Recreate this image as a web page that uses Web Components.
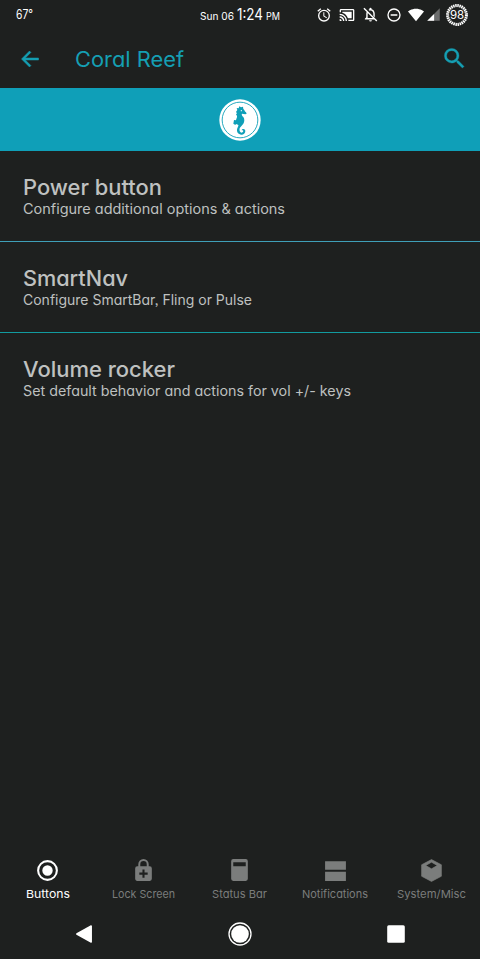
<!DOCTYPE html>
<html lang="en">
<head>
<meta charset="utf-8">
<title>Coral Reef</title>
<style>
html,body{margin:0;background:#1e201f}
body{font-family:Inter,"Noto Sans",sans-serif;font-feature-settings:"cv11","ss03"}
</style>
</head>
<body>
<coral-app></coral-app>
<script>
// Text stretched horizontally to a given width.
class FitText extends HTMLElement {
  connectedCallback() {
    const root = this.attachShadow({mode: 'open'});
    root.innerHTML = '<style>:host{display:block;white-space:nowrap}span{display:inline-block;transform-origin:0 50%}</style><span></span>';
    const s = root.querySelector('span');
    s.textContent = this.getAttribute('text');
    const want = +this.getAttribute('w');
    this.style.width = want + 'px';
    const have = s.getBoundingClientRect().width;
    s.style.transform = `scaleX(${want / have})`;
  }
}
const icons = {
  back: '<path stroke="currentColor" stroke-width=".5" d="M20.500 11H7.330l5.590-5.590L11.500 4l-8 8 8 8 1.410-1.410L7.330 13H20.500z"/>',
  search: '<path stroke="currentColor" stroke-width=".3" d="M15.5 14h-.79l-.28-.27A6.47 6.47 0 0 0 16 9.5 6.5 6.5 0 1 0 9.5 16c1.61 0 3.09-.59 4.23-1.57l.27.28v.79l5 4.99L20.49 19zm-6 0a4.5 4.5 0 1 1 0-9 4.5 4.5 0 0 1 0 9z"/>',
  alarm: '<path d="M22 5.72l-4.6-3.86-1.29 1.53 4.6 3.86zM7.88 3.39L6.6 1.86 2 5.71l1.29 1.53zM12.5 8H11v6l4.75 2.85.75-1.23-4-2.37zM12 4a9 9 0 1 0 0 18 9 9 0 0 0 0-18zm0 16a7 7 0 1 1 0-14 7 7 0 0 1 0 14z"/>',
  cast: '<path d="M1 18v3h3c0-1.66-1.34-3-3-3zm0-4v2c2.76 0 5 2.24 5 5h2c0-3.87-3.13-7-7-7zM19 7H5v1.63c3.96 1.28 7.09 4.41 8.37 8.37H19zM1 10v2a9 9 0 0 1 9 9h2c0-6.08-4.93-11-11-11zm20-7H3c-1.1 0-2 .9-2 2v3h2V5h18v14h-7v2h7c1.1 0 2-.9 2-2V5c0-1.1-.9-2-2-2z"/>',
  silent: '<path d="M7.6 6.6A6 6 0 0 0 6 11v5l-2 2v1h14.7l-2-2H8v-6c0-1.2.4-2.2 1-3zM12 22a2 2 0 0 0 2-2h-4a2 2 0 0 0 2 2zM16 14l2 2v-5c0-3.1-1.6-5.6-4.5-6.3V4a1.5 1.5 0 0 0-3 0v.7l-1.3.5 1.5 1.5C13.800 5.700 16 8 16 11zM3.400 2.400L2 3.800 20.200 22l1.400-1.400z"/>',
  dnd: '<path d="M7 11h10v2H7zM12 2a10 10 0 1 0 0 20 10 10 0 0 0 0-20zm0 18a8 8 0 1 1 0-16 8 8 0 0 1 0 16z"/>',
  wifi: '<path d="M12 21.500L24 6.700C23.500 6.300 19 2.500 12 2.500S.5 6.300 0 6.700z"/>',
  signal: '<path opacity=".35" d="M2 22h20V2z"/><path d="M2 22h11V11z"/>',
  radio: '<path d="M12 7a5 5 0 1 0 0 10 5 5 0 0 0 0-10zm0-5a10 10 0 1 0 0 20 10 10 0 0 0 0-20zm0 18a8 8 0 1 1 0-16 8 8 0 0 1 0 16z"/>',
  lock: '<path fill-rule="evenodd" d="M18 8h-1V6A5 5 0 0 0 7 6v2H6a2 2 0 0 0-2 2v10c0 1.100.9 2 2 2h12a2 2 0 0 0 2-2V10a2 2 0 0 0-2-2zM8.900 6a3.100 3.100 0 0 1 6.200 0v2H8.900zM16 16h-3v3h-2v-3H8v-2h3v-3h2v3h3z"/>',
  status: '<path fill-rule="evenodd" d="M6 1h12a2 2 0 0 1 2 2v17a2 2 0 0 1-2 2H6a2 2 0 0 1-2-2V3a2 2 0 0 1 2-2zm0 3v4h12V4z"/>',
  notif: '<path d="M2 3h20v8.200H2zM2 13.200h20V22H2z"/>',
  box: '<path fill-rule="evenodd" stroke="currentColor" stroke-width=".6" stroke-linejoin="round" d="M12 1.500l9.500 5v11L12 22.500 2.500 17.500v-11zM12 4L6.500 7.200 12 10.400 17.500 7.200z"/>'
};
class GlyphIcon extends HTMLElement {
  connectedCallback() {
    const z = this.getAttribute('size');
    this.attachShadow({mode: 'open'}).innerHTML =
      `<style>:host{display:block;flex:none;width:${z}px;height:${z}px}svg{display:block;fill:currentColor}</style>
       <svg width="${z}" height="${z}" viewBox="0 0 24 24">${icons[this.getAttribute('name')]}</svg>`;
  }
}
class BatteryRing extends HTMLElement {
  connectedCallback() {
    this.attachShadow({mode: 'open'}).innerHTML =
      `<style>:host{display:block;flex:none;width:22px;height:22px}svg{display:block}</style>
       <svg width="22" height="22"><circle cx="11" cy="11" r="9.400" fill="none" stroke="#fff" stroke-width="3" stroke-dasharray="1.500 .610"/>
       <text x="11" y="15" text-anchor="middle" font-size="11.500" fill="#fff" stroke="#1e201f" stroke-width="1.500" paint-order="stroke">98</text></svg>`;
  }
}
class StatusStrip extends HTMLElement {
  connectedCallback() {
    this.attachShadow({mode: 'open'}).innerHTML = `<style>
      :host{display:grid;grid-template-columns:184px 96px 1fr;height:29px;color:#fff;line-height:16px}
      .temp{padding:6px 0 0 16px;font-size:13px}
      .time{display:flex;align-items:baseline;gap:3px;padding:7px 0 0 16px;font-size:10.500px}
      .time .clock{font-size:15.500px}
      .icons{display:flex;align-items:center;padding-left:36px}
      </style>
      <fit-text class="temp" text="67°" w="17"></fit-text>
      <div class="time"><fit-text text="Sun 06" w="34"></fit-text><fit-text class="clock" text="1:24" w="26"></fit-text><fit-text text="PM" w="14"></fit-text></div>
      <div class="icons">
        <glyph-icon name="alarm" size="16"></glyph-icon>
        <glyph-icon name="cast" size="16" style="margin-left:7px"></glyph-icon>
        <glyph-icon name="silent" size="17" style="margin-left:7px"></glyph-icon>
        <glyph-icon name="dnd" size="16" style="margin-left:7px"></glyph-icon>
        <glyph-icon name="wifi" size="16" style="margin-left:6px"></glyph-icon>
        <glyph-icon name="signal" size="15" style="margin-left:2px"></glyph-icon>
        <battery-ring style="margin-left:5px"></battery-ring>
      </div>`;
  }
}
class AppBar extends HTMLElement {
  connectedCallback() {
    this.attachShadow({mode: 'open'}).innerHTML = `<style>
      :host{display:flex;align-items:center;height:59px;box-sizing:border-box;padding:0 12px 0 18px;color:#159fb3}
      fit-text{margin-left:33px;font-size:21.500px;flex:none;padding-top:1px}
      glyph-icon:last-child{margin-left:auto}
      </style>
      <glyph-icon name="back" size="24"></glyph-icon>
      <fit-text text="Coral Reef" w="109"></fit-text>
      <glyph-icon name="search" size="27"></glyph-icon>`;
  }
}
class ReefBanner extends HTMLElement {
  connectedCallback() {
    this.attachShadow({mode: 'open'}).innerHTML = `<style>
      :host{display:flex;align-items:center;justify-content:center;height:63px;background:#0f9fb8}
      svg{display:block}</style>
      <svg width="44" height="44" viewBox="0 0 132 132">
      <circle cx="66" cy="66" r="62" fill="#fff"/><circle cx="66" cy="66" r="53.500" fill="none" stroke="#0f9fb8" stroke-width="2.700"/>
      <path fill="#0f9fb8" d="M58 36L56 30 62 31 64 25 69 28 75 26 76 33C80 36 79 39 84 43L86 47 82 49 72 47C70 50 72 53 76 57C80 63 80 71 76 77C72 83 67 86 65 91C63 98 66 104 71 104C75 104 77 100 75 97L71 97C72 91 82 91 82 99C82 107 75 111 69 110C59 109 55 100 58 91C60 85 63 82 60 80L54 78 52 81 46 77 48 66 54 67C55 61 58 58 57 54L54 49 57 46 54 42z"/>
      <circle cx="70" cy="38" r="2" fill="#fff"/>
      </svg>`;
  }
}
class PrefItem extends HTMLElement {
  connectedCallback() {
    this.attachShadow({mode: 'open'}).innerHTML = `<style>
      :host{display:block;height:91px;box-sizing:border-box;padding:23px 23px 0;color:#bfc1c0;border-bottom:1px solid var(--line,transparent)}
      .t{font-size:21.500px;line-height:26px;font-weight:500}
      .s{font-size:14px;line-height:18px}
      </style>
      <fit-text class="t" text="${this.getAttribute('heading')}" w="${this.getAttribute('hw')}"></fit-text>
      <fit-text class="s" text="${this.getAttribute('summary').replace(/&/g, '&amp;')}" w="${this.getAttribute('sw')}"></fit-text>`;
  }
}
class TabItem extends HTMLElement {
  connectedCallback() {
    this.attachShadow({mode: 'open'}).innerHTML = `<style>
      :host{display:flex;flex-direction:column;align-items:center;color:#7b7d7c}
      :host([active]){color:#fff}
      fit-text{font-size:11px;line-height:14px;margin-top:4px}
      </style>
      <glyph-icon name="${this.getAttribute('icon')}" size="${this.getAttribute('size')}"></glyph-icon>
      <fit-text text="${this.getAttribute('label')}" w="${this.getAttribute('w')}"></fit-text>`;
  }
}
class TabBar extends HTMLElement {
  connectedCallback() {
    this.attachShadow({mode: 'open'}).innerHTML =
      '<style>:host{display:grid;grid-template-columns:repeat(5,1fr);height:57px;padding:6px 1px 0 0;box-sizing:border-box}</style><slot></slot>';
  }
}
class NavKeys extends HTMLElement {
  connectedCallback() {
    this.attachShadow({mode: 'open'}).innerHTML = `<style>
      :host{display:grid;grid-template-columns:168px 144px 168px;height:50px;align-items:center;justify-items:center}
      svg{display:block;fill:#fff}</style>
      <svg width="24" height="24"><path stroke="#fff" stroke-width="1.500" stroke-linejoin="round" d="M4.800 12L19.200 4v16z"/></svg>
      <svg width="24" height="24"><circle cx="12" cy="12" r="8.800"/><circle cx="12" cy="12" r="11" fill="none" stroke="#fff" stroke-width="1.300"/></svg>
      <svg width="24" height="24"><rect x="3.200" y="3.200" width="17.600" height="17.600" rx="1.500"/></svg>`;
  }
}
class CoralApp extends HTMLElement {
  connectedCallback() {
    this.attachShadow({mode: 'open'}).innerHTML = `<style>
      :host{display:flex;flex-direction:column;height:959px;background:#1e201f;overflow:hidden}
      main{flex:1}
      </style>
      <status-strip></status-strip><app-bar></app-bar><reef-banner></reef-banner>
      <main>
      <pref-item style="--line:#3f9fb8" heading="Power button" hw="139" summary="Configure additional options &amp; actions" sw="262"></pref-item>
      <pref-item style="--line:#129b9f" heading="SmartNav" hw="105" summary="Configure SmartBar, Fling or Pulse" sw="229"></pref-item>
      <pref-item heading="Volume rocker" hw="152" summary="Set default behavior and actions for vol +/- keys" sw="328"></pref-item>
      </main>
      <tab-bar>
      <tab-item active icon="radio" size="25" label="Buttons" w="44"></tab-item>
      <tab-item icon="lock" size="25" label="Lock Screen" w="63"></tab-item>
      <tab-item icon="status" size="25" label="Status Bar" w="55"></tab-item>
      <tab-item icon="notif" size="25" label="Notifications" w="66"></tab-item>
      <tab-item icon="box" size="25" label="System/Misc" w="69"></tab-item>
      </tab-bar>
      <nav-keys></nav-keys>`;
  }
}
for (const [n, c] of Object.entries({'fit-text': FitText, 'glyph-icon': GlyphIcon, 'battery-ring': BatteryRing, 'status-strip': StatusStrip, 'app-bar': AppBar, 'reef-banner': ReefBanner, 'pref-item': PrefItem, 'tab-item': TabItem, 'tab-bar': TabBar, 'nav-keys': NavKeys, 'coral-app': CoralApp})) customElements.define(n, c);
</script>
</body>
</html>
